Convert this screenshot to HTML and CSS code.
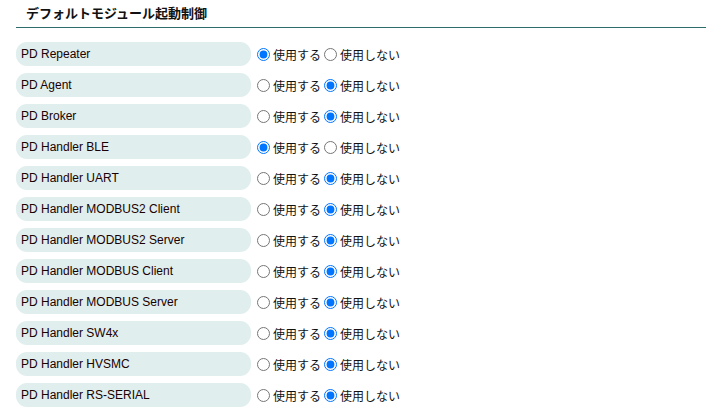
FILE: index.html
```html
<!DOCTYPE html>
<html lang="ja">
<head>
<meta charset="utf-8">
<link rel="stylesheet" href="styles.css">
</head>
<body>
<div class="panel">
  <h2 class="title">デフォルトモジュール起動制御</h2>
  <div class="list">
    <div class="row"><div class="name">PD Repeater</div><label class="opt"><input type="radio" name="r1" checked>使用する</label><label class="opt"><input type="radio" name="r1">使用しない</label></div>
    <div class="row"><div class="name">PD Agent</div><label class="opt"><input type="radio" name="r2">使用する</label><label class="opt"><input type="radio" name="r2" checked>使用しない</label></div>
    <div class="row"><div class="name">PD Broker</div><label class="opt"><input type="radio" name="r3">使用する</label><label class="opt"><input type="radio" name="r3" checked>使用しない</label></div>
    <div class="row"><div class="name">PD Handler BLE</div><label class="opt"><input type="radio" name="r4" checked>使用する</label><label class="opt"><input type="radio" name="r4">使用しない</label></div>
    <div class="row"><div class="name">PD Handler UART</div><label class="opt"><input type="radio" name="r5">使用する</label><label class="opt"><input type="radio" name="r5" checked>使用しない</label></div>
    <div class="row"><div class="name">PD Handler MODBUS2 Client</div><label class="opt"><input type="radio" name="r6">使用する</label><label class="opt"><input type="radio" name="r6" checked>使用しない</label></div>
    <div class="row"><div class="name">PD Handler MODBUS2 Server</div><label class="opt"><input type="radio" name="r7">使用する</label><label class="opt"><input type="radio" name="r7" checked>使用しない</label></div>
    <div class="row"><div class="name">PD Handler MODBUS Client</div><label class="opt"><input type="radio" name="r8">使用する</label><label class="opt"><input type="radio" name="r8" checked>使用しない</label></div>
    <div class="row"><div class="name">PD Handler MODBUS Server</div><label class="opt"><input type="radio" name="r9">使用する</label><label class="opt"><input type="radio" name="r9" checked>使用しない</label></div>
    <div class="row"><div class="name">PD Handler SW4x</div><label class="opt"><input type="radio" name="r10">使用する</label><label class="opt"><input type="radio" name="r10" checked>使用しない</label></div>
    <div class="row"><div class="name">PD Handler HVSMC</div><label class="opt"><input type="radio" name="r11">使用する</label><label class="opt"><input type="radio" name="r11" checked>使用しない</label></div>
    <div class="row"><div class="name">PD Handler RS-SERIAL</div><label class="opt"><input type="radio" name="r12">使用する</label><label class="opt"><input type="radio" name="r12" checked>使用しない</label></div>
  </div>
</div>
</body>
</html>
```
FILE: styles.css
```css
html, body {
  margin: 0;
  padding: 0;
  background: #ffffff;
}
.panel {
  width: 690px;
  padding-left: 16px;
  font-family: "Liberation Sans", Arial, "Noto Sans CJK JP", sans-serif;
  color: #000;
}
.title {
  margin: 0;
  height: 28px;
  box-sizing: border-box;
  padding: 5px 0 0 10px;
  font-family: "Noto Sans CJK JP", sans-serif;
  font-size: 13px;
  font-weight: bold;
  line-height: 16px;
  color: #111;
  border-bottom: 1px solid #2e6b6b;
}
.list {
  display: flex;
  flex-direction: column;
  gap: 7px;
  padding-top: 14px;
}
.row {
  display: flex;
  align-items: center;
  height: 24px;
}
.name {
  width: 230px;
  height: 24px;
  line-height: 24px;
  padding-left: 5px;
  background: #e0eeee;
  border-radius: 11px;
  font-size: 12px;
  color: #1a0000;
}
.opt {
  display: flex;
  align-items: center;
  font-family: "Noto Sans CJK JP", sans-serif;
  font-size: 12px;
  color: #111;
}
.opt input {
  width: 13px;
  height: 13px;
  margin: 0 3px 0 6px;
}
.opt + .opt input {
  margin-left: 3px;
}
```
